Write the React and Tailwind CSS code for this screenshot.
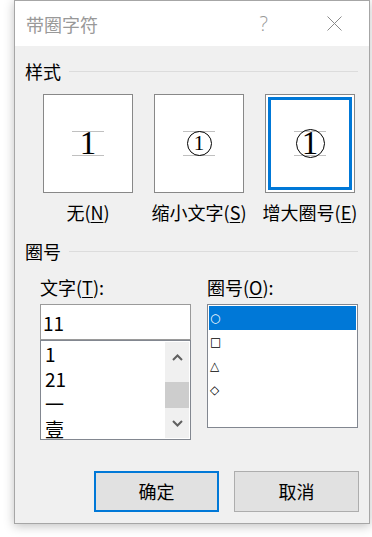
import React from 'react';

const CJK = { fontFamily: '"Noto Sans CJK SC", "Microsoft YaHei", sans-serif' };

function SectionHeader({ label }) {
  return (
    <div className="flex items-center pl-[10px] pr-[11px] h-[20px]">
      <span className="text-[18px] leading-[20px] text-black">{label}</span>
      <div className="flex-1 h-px bg-[#dcdcdc] ml-[8px]" />
    </div>
  );
}

function Preview({ kind }) {
  return (
    <div className="w-[32px] h-[25px] border-y border-[#c0c0c0] flex items-center justify-center overflow-visible">
      {kind === 'none' && (
        <span className="text-[33px] leading-none text-black" style={{ fontFamily: '"Liberation Serif", serif' }}>1</span>
      )}
      {kind === 'small' && (
        <span
          className="shrink-0 w-[25px] h-[25px] rounded-full border border-black flex items-center justify-center text-[21px] leading-none text-black"
          style={{ fontFamily: '"Liberation Serif", serif' }}
        >
          1
        </span>
      )}
      {kind === 'big' && (
        <span
          className="shrink-0 w-[29px] h-[29px] rounded-full border border-black flex items-center justify-center text-[33px] leading-none text-black"
          style={{ fontFamily: '"Liberation Serif", serif' }}
        >
          1
        </span>
      )}
    </div>
  );
}

function StyleOption({ kind, label, hotkey, selected }) {
  return (
    <div className="w-[90px] flex flex-col items-center">
      <div className="w-[90px] h-[99px] border border-[#888888] bg-white p-[2px]">
        <div className={`w-full h-full flex items-center justify-center ${selected ? 'border-[3px] border-[#0078d7]' : ''}`}>
          <Preview kind={kind} />
        </div>
      </div>
      <div className="mt-[9px] h-[20px] text-[18px] leading-[20px] text-black whitespace-nowrap">
        {label}(<span className="underline underline-offset-2">{hotkey}</span>)
      </div>
    </div>
  );
}

function Chevron({ up }) {
  return (
    <svg width="11" height="7" viewBox="0 0 11 7">
      <path
        d={up ? 'M1 6 L5.5 1.5 L10 6' : 'M1 1 L5.5 5.5 L10 1'}
        fill="none"
        stroke="#606060"
        strokeWidth="2"
      />
    </svg>
  );
}

export default function App() {
  const textItems = ['1', '21', '一', '壹'];
  const shapes = ['○', '□', '△', '◇'];

  return (
    <div className="w-[372px] h-[537px] bg-white overflow-hidden" style={CJK}>
      <div className="ml-[14px] w-[356px] h-[524px] border border-[#a6a6a6] flex flex-col shadow-[0_2px_10px_rgba(0,0,0,0.25)]">
        {/* title bar */}
        <div className="h-[45px] bg-white flex items-center">
          <span className="pl-[11px] text-[18px] leading-[20px] text-[#999999]">带圈字符</span>
          <span className="ml-auto mr-[59px] text-[20px] leading-[20px] text-[#999999] font-light" style={{ fontFamily: '"Open Sans", sans-serif' }}>?</span>
          <svg width="15" height="15" viewBox="0 0 15 15" className="mr-[27px]">
            <path d="M0.5 0.5 L14.5 14.5 M14.5 0.5 L0.5 14.5" stroke="#8a8a8a" strokeWidth="1" />
          </svg>
        </div>

        {/* body */}
        <div className="flex-1 bg-[#f0f0f0] flex flex-col">
          <div className="mt-[15px]">
            <SectionHeader label="样式" />
          </div>

          <div className="mt-[13px] pl-[28px] flex gap-[21px]">
            <StyleOption kind="none" label="无" hotkey="N" />
            <StyleOption kind="small" label="缩小文字" hotkey="S" />
            <StyleOption kind="big" label="增大圈号" hotkey="E" selected />
          </div>

          <div className="mt-[19px]">
            <SectionHeader label="圈号" />
          </div>

          <div className="mt-[16px] pl-[25px] flex gap-[16px]">
            {/* text column */}
            <div className="w-[151px] flex flex-col">
              <div className="h-[20px] text-[18px] leading-[20px] text-black">
                文字(<span className="underline underline-offset-2">T</span>):
              </div>
              <div className="mt-[7px] h-[36px] border border-[#9a9a9a] bg-white flex items-center pl-[2px]">
                <span className="text-[19px] leading-none text-black">11</span>
              </div>
              <div className="h-[100px] border border-[#828790] bg-white flex">
                <div className="flex-1 flex flex-col">
                  {textItems.map(t => (
                    <div key={t} className="h-[25px] shrink-0 flex items-center pl-[4px] text-[19px] leading-none text-black">
                      {t}
                    </div>
                  ))}
                </div>
                <div className="w-[24px] my-[1px] mr-[1px] bg-[#f0f0f0] flex flex-col items-center">
                  <div className="h-[30px] flex items-center justify-center">
                    <Chevron up />
                  </div>
                  <div className="mt-[10px] w-full h-[26px] bg-[#cdcdcd]" />
                  <div className="flex-1 flex items-center justify-center">
                    <Chevron />
                  </div>
                </div>
              </div>
            </div>

            {/* shape column */}
            <div className="w-[151px] flex flex-col">
              <div className="h-[20px] text-[18px] leading-[20px] text-black">
                圈号(<span className="underline underline-offset-2">O</span>):
              </div>
              <div className="mt-[7px] h-[124px] border border-[#828790] bg-white p-[1px] flex flex-col">
                {shapes.map((s, i) => (
                  <div
                    key={s}
                    className={`h-[24px] shrink-0 flex items-center pl-[1px] text-[12px] leading-none ${i === 0 ? 'bg-[#0078d7] text-white' : 'text-black'}`}
                    style={{ fontFamily: '"DejaVu Sans", sans-serif' }}
                  >
                    {s}
                  </div>
                ))}
              </div>
            </div>
          </div>

          {/* buttons */}
          <div className="mt-auto mb-[11px] pr-[10px] flex justify-end gap-[15px]">
            <button className="w-[125px] h-[41px] border-2 border-[#0078d7] bg-[#e1e1e1] text-[18px] text-black">
              确定
            </button>
            <button className="w-[125px] h-[41px] border border-[#adadad] bg-[#e1e1e1] text-[18px] text-black">
              取消
            </button>
          </div>
        </div>
      </div>
    </div>
  );
}
